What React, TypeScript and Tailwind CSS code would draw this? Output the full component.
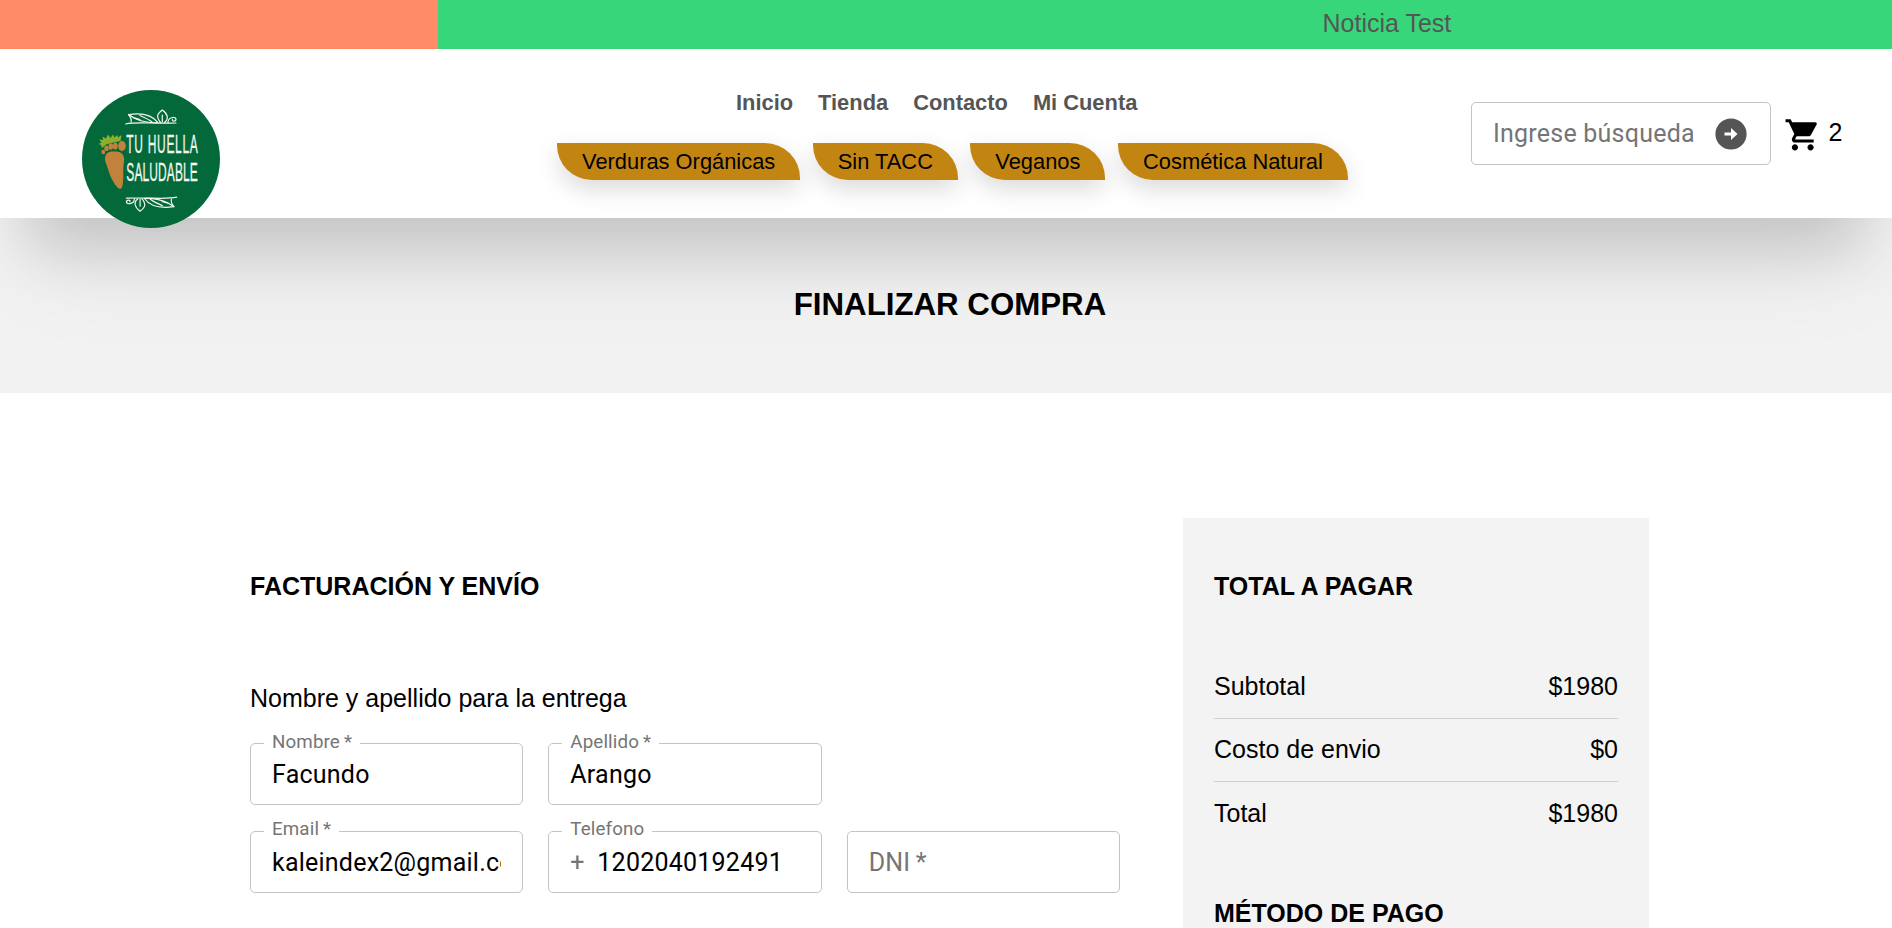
import React from "react";
import { MdShoppingCart } from "react-icons/md";

const arial = "font-['Liberation_Sans',Arial,sans-serif]";
const roboto = "font-[Roboto,sans-serif]";

function Logo() {
  const branch = (
    <g fill="none" stroke="#f1f7ee" strokeWidth="1.2" strokeLinecap="round" strokeLinejoin="round">
      <path d="M43.700 34C55 31.500 70 34 94 33" />
      <path d="M49 32C50 29 48 26.500 46.500 24.500C57 23 69 23 76 32.700C66 33 58 31 52 28" />
      <path d="M46.500 24.500C51 28 54 29 58 29.500M58 25.500C63 28 67 29.500 70 32" />
      <path d="M78.500 32.500C74 27 75 24 80.300 20C86 24 87 29 82.500 32.500M80.300 25V32" />
      <path d="M86 32.500C86 27 93 26.500 94 29C94 32 89.500 31.500 90.500 29.500" />
    </g>
  );
  return (
    <svg viewBox="0 0 138 138" className="block size-[138px]" role="img">
      <circle cx="69" cy="69" r="69" fill="#03693b" />
      {branch}
      <g transform="rotate(180 69.200 70.600)">{branch}</g>
      <path
        d="M20 58L19 55L16.500 54L19.500 52.500L17 49.500L21 50L20.500 46.500L24 48.500L26 44.500L28.500 48L31 44.500L32.500 47.500L35.500 45L36 47.500L39.500 45L38.500 51L34 52L29 53L24 54.500Z"
        fill="#8fae2c"
      />
      <g fill="#c3823c">
        <ellipse cx="21.300" cy="62" rx="1.900" ry="2.200" />
        <ellipse cx="24.500" cy="58.300" rx="2.200" ry="2.800" />
        <ellipse cx="28.800" cy="56.500" rx="2.300" ry="3.200" />
        <ellipse cx="33.300" cy="56" rx="2.400" ry="3.500" />
        <ellipse cx="40" cy="56" rx="3.800" ry="5" />
        <path d="M23 69C23 62 28 61 34 61.500C40 61.500 43 66 42 72C40.500 79 42 85 41 92C40.500 99 38.500 100.500 35 97C30 91 27.500 84 26 79C25 75 23 72 23 69Z" />
      </g>
      <g
        fill="#f1f7ee"
        stroke="#f1f7ee"
        strokeWidth="0.300"
        className="font-['Liberation_Sans',Arial,sans-serif]"
        fontSize="25"
      >
        <text transform="translate(44.300 62.800) scale(.48 1)" textLength="149" lengthAdjust="spacing">
          TU HUELLA
        </text>
        <text transform="translate(44.300 91.200) scale(.48 1)" textLength="149" lengthAdjust="spacing">
          SALUDABLE
        </text>
      </g>
    </svg>
  );
}

function Pill({ children, className }: { children: React.ReactNode; className: string }) {
  return (
    <a
      className={`flex h-[37px] items-center justify-center whitespace-nowrap rounded-tr-[35px] rounded-bl-[35px] bg-[#c38512] pt-px text-[21.875px] text-black shadow-[0_9px_25px_rgba(0,0,0,0.15)] ${className}`}
    >
      {children}
    </a>
  );
}

type FieldProps = { label: string; required?: boolean; value?: string; prefix?: string; labelTop?: string };

function Field({ label, required, value, prefix, labelTop = "-top-[14px]" }: FieldProps) {
  const caption = required ? `${label}\u2009*` : label;
  return (
    <fieldset className={`relative h-[62px] min-w-0 rounded-[5px] border border-[#c4c4c4] px-[21px] ${roboto}`}>
      {value && (
        <span
          className={`absolute left-[13px] bg-white px-2 text-[18.750px] leading-6 tracking-[0.13px] text-[#757575] ${labelTop}`}
        >
          {caption}
        </span>
      )}
      <div className="flex h-full items-center overflow-hidden pt-px whitespace-nowrap text-[25px] leading-none tracking-[0.23px]">
        {prefix && <span className="w-[27px] shrink-0 text-[#757575]">{prefix}</span>}
        <span className={value ? "text-black" : "text-[#757575]"}>{value ?? caption}</span>
      </div>
    </fieldset>
  );
}

function Row({ label, value, last }: { label: string; value: string; last?: boolean }) {
  return (
    <div className={`flex h-[63px] items-center justify-between ${last ? "" : "border-b border-[#d0d0d0]"}`}>
      <span>{label}</span>
      <span>{value}</span>
    </div>
  );
}

export default function App() {
  return (
    <div className={`h-[928px] overflow-hidden bg-white text-black ${arial}`}>
      <div className="flex h-[49px] text-[25px] text-[#555]">
        <div className="w-[437.500px] bg-[#ff8c66]" />
        <div className="flex flex-1 items-center bg-[#38d67a] pb-[2px] pl-[885px]">Noticia Test</div>
      </div>

      <header className="relative z-10 flex h-[169px] bg-white shadow-[0_62px_110px_-22px_rgba(0,0,0,0.08),0_60px_60px_-30px_rgba(0,0,0,0.14)]">
        <div className="w-[556px] shrink-0 pt-[41px] pl-[82px]">
          <Logo />
        </div>
        <div className="w-[792px] shrink-0 pt-[40px]">
          <nav className="flex gap-[25px] pl-[180px] text-[21.875px] leading-[28px] font-bold text-[#555]">
            <a>Inicio</a>
            <a>Tienda</a>
            <a>Contacto</a>
            <a>Mi Cuenta</a>
          </nav>
          <div className="mt-[26px] flex gap-[12.700px] pl-px">
            <Pill className="w-[243.300px]">Verduras Orgánicas</Pill>
            <Pill className="w-[144.800px]">Sin TACC</Pill>
            <Pill className="w-[134.800px]">Veganos</Pill>
            <Pill className="w-[230.100px]">Cosmética Natural</Pill>
          </div>
        </div>
        <div className="flex flex-1 items-start pt-[53px] pl-[123px]">
          <div
            className={`flex h-[63px] w-[300px] items-center rounded-[5px] border border-[#c4c4c4] pl-[21px] text-[25px] tracking-[0.23px] text-[#757575] ${roboto}`}
          >
            <span className="w-[222px] whitespace-nowrap">Ingrese búsqueda</span>
            <svg viewBox="0 0 32 32" className="size-8">
              <circle cx="16" cy="16" r="15.600" fill="#555" />
              <path d="M9.500 14.400H16V10L22.500 16L16 22V17.600H9.500Z" fill="#fff" />
            </svg>
          </div>
          <div className="flex h-[63px] items-center pl-[13px]">
            <MdShoppingCart className="mt-[2px] size-[37.500px]" />
            <span className="pb-[2px] pl-[7px] text-[25px]">2</span>
          </div>
        </div>
      </header>

      <div className="flex h-[175px] items-center justify-center bg-[#f2f2f2] pb-[2px] pl-[8px]">
        <h1 className="text-[31.250px] leading-none font-bold">FINALIZAR COMPRA</h1>
      </div>

      <main className="flex px-[250px] pt-[125px]">
        <section className="w-[933px] shrink-0 pt-[52px]">
          <h2 className="text-[25px] leading-8 font-bold">FACTURACIÓN Y ENVÍO</h2>
          <p className="mt-[80px] text-[25px] leading-8">Nombre y apellido para la entrega</p>
          <div className="mt-[29px] grid w-[870px] grid-cols-3 gap-x-[25px] gap-y-[26px]">
            <Field label="Nombre" required value="Facundo" />
            <Field label="Apellido" required value="Arango" />
            <span />
            <Field label="Email" required value="kaleindex2@gmail.com" labelTop="-top-[15px]" />
            <Field label="Telefono" prefix="+" value="1202040192491" labelTop="-top-[15px]" />
            <Field label="DNI" required />
          </div>
        </section>
        <aside className="h-[500px] w-[466px] shrink-0 bg-[#f3f3f3] px-[31px] pt-[52px]">
          <h2 className="text-[25px] leading-8 font-bold">TOTAL A PAGAR</h2>
          <div className="mt-[54px] text-[25px]">
            <Row label="Subtotal" value="$1980" />
            <Row label="Costo de envio" value="$0" />
            <Row label="Total" value="$1980" last />
          </div>
          <h2 className="mt-[52px] text-[25px] leading-8 font-bold">MÉTODO DE PAGO</h2>
        </aside>
      </main>
    </div>
  );
}
